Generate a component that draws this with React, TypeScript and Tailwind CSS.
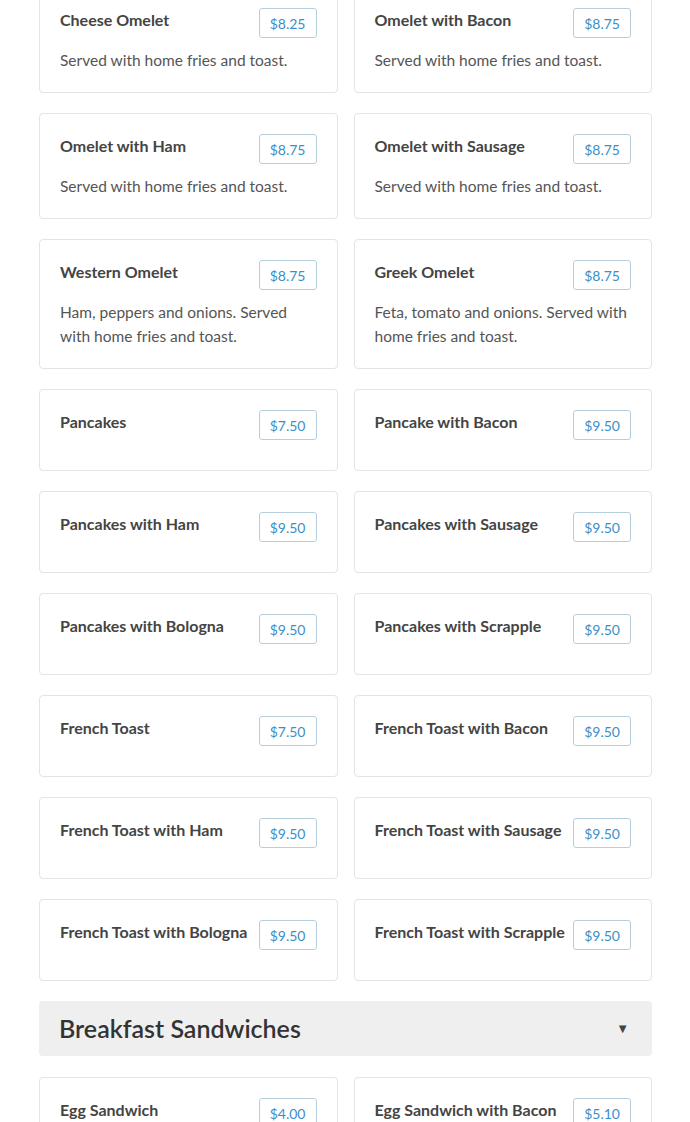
import React from 'react';

interface MenuItem {
  name: string;
  price: string;
  desc?: string;
}

const served = 'Served with home fries and toast.';

const omelets: MenuItem[] = [
  { name: 'Cheese Omelet', price: '$8.25', desc: served },
  { name: 'Omelet with Bacon', price: '$8.75', desc: served },
  { name: 'Omelet with Ham', price: '$8.75', desc: served },
  { name: 'Omelet with Sausage', price: '$8.75', desc: served },
  { name: 'Western Omelet', price: '$8.75', desc: 'Ham, peppers and onions. Served with home fries and toast.' },
  { name: 'Greek Omelet', price: '$8.75', desc: 'Feta, tomato and onions. Served with home fries and toast.' },
  { name: 'Pancakes', price: '$7.50' },
  { name: 'Pancake with Bacon', price: '$9.50' },
  { name: 'Pancakes with Ham', price: '$9.50' },
  { name: 'Pancakes with Sausage', price: '$9.50' },
  { name: 'Pancakes with Bologna', price: '$9.50' },
  { name: 'Pancakes with Scrapple', price: '$9.50' },
  { name: 'French Toast', price: '$7.50' },
  { name: 'French Toast with Bacon', price: '$9.50' },
  { name: 'French Toast with Ham', price: '$9.50' },
  { name: 'French Toast with Sausage', price: '$9.50' },
  { name: 'French Toast with Bologna', price: '$9.50' },
  { name: 'French Toast with Scrapple', price: '$9.50' },
];

const sandwiches: MenuItem[] = [
  { name: 'Egg Sandwich', price: '$4.00', desc: 'Served on white toast or a kaiser roll.' },
  { name: 'Egg Sandwich with Bacon', price: '$5.10', desc: 'Served on white toast or a kaiser roll.' },
];

const ItemCard: React.FC<{ item: MenuItem }> = ({ item }) => (
  <div className="bg-white border border-[#e4e4e4] rounded-[4px] px-5 pt-5 pb-5">
    <div className="flex items-start justify-between gap-[7px] mb-[10px]">
      <h3 className="text-[16px] leading-6 font-bold text-[#444]">{item.name}</h3>
      <span className="shrink-0 h-[30px] px-[10px] flex items-center border border-[#b7cfdc] rounded-[3px] text-[14px] text-[#3b8fc7]">
        {item.price}
      </span>
    </div>
    {item.desc && <p className="text-[15.5px] leading-6 text-[#555]">{item.desc}</p>}
  </div>
);

export default function App() {
  return (
    <div className="bg-white min-h-screen" style={{ fontFamily: 'Lato, "Noto Sans", sans-serif' }}>
      <div className="w-[613px] ml-[39px] -mt-[13px]">
        <div className="grid grid-cols-2 gap-x-4 gap-y-5">
          {omelets.map((item) => (
            <ItemCard key={item.name} item={item} />
          ))}
        </div>

        <div className="mt-5 h-[55px] bg-[#efefef] rounded-[4px] flex items-center justify-between pl-5 pr-[23px]">
          <h2 className="text-[25px] font-semibold text-[#333]">Breakfast Sandwiches</h2>
          <span className="text-[13px] text-[#444]">▼</span>
        </div>

        <div className="mt-[21px] grid grid-cols-2 gap-x-4 gap-y-5">
          {sandwiches.map((item) => (
            <ItemCard key={item.name} item={item} />
          ))}
        </div>
      </div>
    </div>
  );
}
